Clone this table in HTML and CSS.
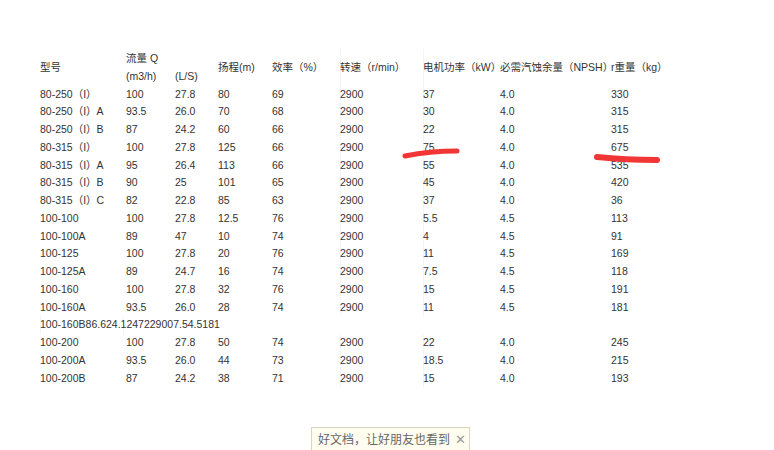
FILE: index.html
```html
<!DOCTYPE html>
<html lang="zh">
<head>
<meta charset="utf-8">
<link rel="stylesheet" href="styles.css">
</head>
<body>
<div class="page">
  <div class="table">
    <div class="row head">
      <div class="c c1 mid">型号</div>
      <div class="c c2"><div>流量 Q</div><div>(m3/h)</div></div>
      <div class="c c3"><div>&nbsp;</div><div>(L/S)</div></div>
      <div class="c c4 mid">扬程(m)</div>
      <div class="c c5 mid">效率（%）</div>
      <div class="c c6 mid line">转速（r/min）</div>
      <div class="c c7 mid line">电机功率（kW）</div>
      <div class="c c8 mid">必需汽蚀余量（NPSH）</div>
      <div class="c c9 mid">r重量（kg）</div>
    </div>
    <div class="row"><div class="c c1">80-250（I）</div><div class="c c2">100</div><div class="c c3">27.8</div><div class="c c4">80</div><div class="c c5">69</div><div class="c c6 line">2900</div><div class="c c7 line">37</div><div class="c c8">4.0</div><div class="c c9">330</div></div>
    <div class="row"><div class="c c1">80-250（I）A</div><div class="c c2">93.5</div><div class="c c3">26.0</div><div class="c c4">70</div><div class="c c5">68</div><div class="c c6 line">2900</div><div class="c c7 line">30</div><div class="c c8">4.0</div><div class="c c9">315</div></div>
    <div class="row"><div class="c c1">80-250（I）B</div><div class="c c2">87</div><div class="c c3">24.2</div><div class="c c4">60</div><div class="c c5">66</div><div class="c c6 line">2900</div><div class="c c7 line">22</div><div class="c c8">4.0</div><div class="c c9">315</div></div>
    <div class="row"><div class="c c1">80-315（I）</div><div class="c c2">100</div><div class="c c3">27.8</div><div class="c c4">125</div><div class="c c5">66</div><div class="c c6 line">2900</div><div class="c c7 line">75</div><div class="c c8">4.0</div><div class="c c9">675</div></div>
    <div class="row"><div class="c c1">80-315（I）A</div><div class="c c2">95</div><div class="c c3">26.4</div><div class="c c4">113</div><div class="c c5">66</div><div class="c c6 line">2900</div><div class="c c7 line">55</div><div class="c c8">4.0</div><div class="c c9">535</div></div>
    <div class="row"><div class="c c1">80-315（I）B</div><div class="c c2">90</div><div class="c c3">25</div><div class="c c4">101</div><div class="c c5">65</div><div class="c c6 line">2900</div><div class="c c7 line">45</div><div class="c c8">4.0</div><div class="c c9">420</div></div>
    <div class="row"><div class="c c1">80-315（I）C</div><div class="c c2">82</div><div class="c c3">22.8</div><div class="c c4">85</div><div class="c c5">63</div><div class="c c6 line">2900</div><div class="c c7 line">37</div><div class="c c8">4.0</div><div class="c c9">36</div></div>
    <div class="row"><div class="c c1">100-100</div><div class="c c2">100</div><div class="c c3">27.8</div><div class="c c4">12.5</div><div class="c c5">76</div><div class="c c6 line">2900</div><div class="c c7 line">5.5</div><div class="c c8">4.5</div><div class="c c9">113</div></div>
    <div class="row"><div class="c c1">100-100A</div><div class="c c2">89</div><div class="c c3">47</div><div class="c c4">10</div><div class="c c5">74</div><div class="c c6 line">2900</div><div class="c c7 line">4</div><div class="c c8">4.5</div><div class="c c9">91</div></div>
    <div class="row"><div class="c c1">100-125</div><div class="c c2">100</div><div class="c c3">27.8</div><div class="c c4">20</div><div class="c c5">76</div><div class="c c6 line">2900</div><div class="c c7 line">11</div><div class="c c8">4.5</div><div class="c c9">169</div></div>
    <div class="row"><div class="c c1">100-125A</div><div class="c c2">89</div><div class="c c3">24.7</div><div class="c c4">16</div><div class="c c5">74</div><div class="c c6 line">2900</div><div class="c c7 line">7.5</div><div class="c c8">4.5</div><div class="c c9">118</div></div>
    <div class="row"><div class="c c1">100-160</div><div class="c c2">100</div><div class="c c3">27.8</div><div class="c c4">32</div><div class="c c5">76</div><div class="c c6 line">2900</div><div class="c c7 line">15</div><div class="c c8">4.5</div><div class="c c9">191</div></div>
    <div class="row"><div class="c c1">100-160A</div><div class="c c2">93.5</div><div class="c c3">26.0</div><div class="c c4">28</div><div class="c c5">74</div><div class="c c6 line">2900</div><div class="c c7 line">11</div><div class="c c8">4.5</div><div class="c c9">181</div></div>
    <div class="row"><div class="c span">100-160B86.624.1247229007.54.5181</div><div class="c c6 line"></div><div class="c c7 line"></div></div>
    <div class="row"><div class="c c1">100-200</div><div class="c c2">100</div><div class="c c3">27.8</div><div class="c c4">50</div><div class="c c5">74</div><div class="c c6 line">2900</div><div class="c c7 line">22</div><div class="c c8">4.0</div><div class="c c9">245</div></div>
    <div class="row"><div class="c c1">100-200A</div><div class="c c2">93.5</div><div class="c c3">26.0</div><div class="c c4">44</div><div class="c c5">73</div><div class="c c6 line">2900</div><div class="c c7 line">18.5</div><div class="c c8">4.0</div><div class="c c9">215</div></div>
    <div class="row"><div class="c c1">100-200B</div><div class="c c2">87</div><div class="c c3">24.2</div><div class="c c4">38</div><div class="c c5">71</div><div class="c c6 line">2900</div><div class="c c7 line">15</div><div class="c c8">4.0</div><div class="c c9">193</div></div>
  </div>
</div>
<svg class="marks" width="774" height="450" viewBox="0 0 774 450">
  <path d="M405 156 Q430 151 457 151" stroke="#f23636" stroke-width="5" stroke-linecap="round" fill="none"/>
  <path d="M597 157 Q625 160 657 160" stroke="#f23636" stroke-width="6" stroke-linecap="round" fill="none"/>
</svg>
<div class="share">好文档，让好朋友也看到<span class="close">✕</span></div>
</body>
</html>
```

FILE: styles.css
```css
html, body {
  margin: 0;
  padding: 0;
  background: #fff;
}
body {
  font-family: "Liberation Sans", "Noto Sans CJK SC", sans-serif;
  font-size: 10.5px;
  color: #333;
  width: 774px;
  height: 450px;
  overflow: hidden;
}
.page {
  padding: 49px 0 0 40px;
}
.table {
  display: flex;
  flex-direction: column;
}
.row {
  display: flex;
  height: 17.75px;
  line-height: 17.75px;
  white-space: nowrap;
}
.row.head {
  height: 36.5px;
  line-height: 18px;
}
.c {
  flex: none;
}
.mid {
  display: flex;
  align-items: center;
}
.c1 { width: 86px; }
.c2 { width: 49px; }
.c3 { width: 43px; }
.c4 { width: 54px; }
.c5 { width: 68px; }
.c6 { width: 83px; }
.c7 { width: 77px; }
.c8 { width: 111px; }
.c9 { width: 80px; }
.span { width: 300px; margin-right: -300px; position: relative; z-index: 1; }
.line { box-shadow: inset 1px 0 0 #f4f4f4; }
.marks {
  position: absolute;
  left: 0;
  top: 0;
  pointer-events: none;
}
.share {
  position: absolute;
  left: 311px;
  top: 427px;
  width: 159px;
  height: 30px;
  box-sizing: border-box;
  border: 1px solid #d9d6be;
  background: #fffdf0;
  color: #666;
  font-size: 12px;
  line-height: 24px;
  padding-left: 6px;
}
.close {
  color: #999;
  font-size: 13px;
  margin-left: 5px;
}
```
